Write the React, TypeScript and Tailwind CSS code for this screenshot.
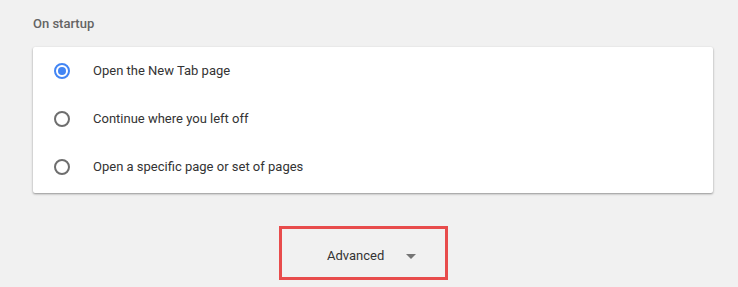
import React from "react";

function Radio({ checked }: { checked?: boolean }) {
  return checked ? (
    <span className="flex h-4 w-4 items-center justify-center rounded-full border-2 border-[#4285f4]">
      <span className="h-2 w-2 rounded-full bg-[#4285f4]" />
    </span>
  ) : (
    <span className="h-4 w-4 rounded-full border-2 border-[#6e6e6e]" />
  );
}

export default function App() {
  const opts = [
    { label: "Open the New Tab page", checked: true },
    { label: "Continue where you left off" },
    { label: "Open a specific page or set of pages" },
  ];
  return (
    <div className="h-[287px] w-[738px] overflow-hidden bg-[#f1f1f1] pl-[33px] pr-[25px] pt-[14px] font-['Roboto',sans-serif]">
      <div className="h-[19px] text-[13px] font-medium leading-[19px] text-[#646464]">On startup</div>
      <div className="mt-[14px] rounded-[2px] bg-white pb-[2px] shadow-[0_1px_2px_rgba(0,0,0,0.3),0_1px_3px_rgba(0,0,0,0.12)]">
        {opts.map((o) => (
          <div key={o.label} className="flex h-[48px] items-center pl-[21px]">
            <Radio checked={o.checked} />
            <span className="ml-[23px] text-[13px] text-[#333333]">{o.label}</span>
          </div>
        ))}
      </div>
      <div className="mt-[33px] flex pl-[246px]">
        <div className="flex h-[54px] w-[169px] items-center border-[3px] border-[#e84c4c] pl-[45px] pt-[6px]">
          <span className="text-[13px] text-[#333333]">Advanced</span>
          <svg width="10" height="5" viewBox="0 0 10 5" className="ml-[22px]">
            <path d="M0 0 L10 0 L5 5 Z" fill="#757575" />
          </svg>
        </div>
      </div>
    </div>
  );
}
